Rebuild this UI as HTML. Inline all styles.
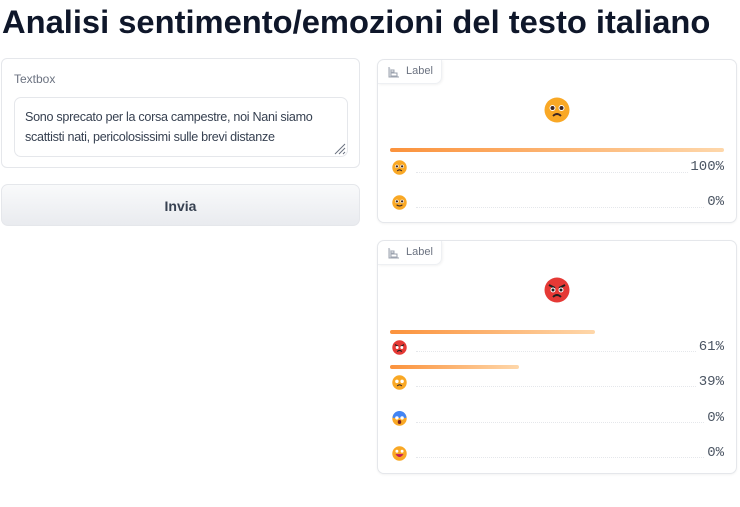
<!DOCTYPE html>
<html><head><meta charset="utf-8"><style>
*{box-sizing:border-box;margin:0;padding:0}
body{width:740px;height:507px;background:#fff;font-family:"Liberation Sans","DejaVu Sans",sans-serif;position:relative;overflow:hidden;color:#374151}
.a{position:absolute}
h1{position:absolute;left:2px;top:3px;font-size:32.7px;font-weight:bold;color:#0f172a;white-space:nowrap;letter-spacing:0}
.panel{border:1px solid #e5e7eb;border-radius:6px;background:#fff}
.card{border:1px solid #e5e7eb;border-radius:7px;background:#fff;box-shadow:0 1px 2px rgba(0,0,0,.05)}
.tab{position:absolute;left:0;top:0;width:64px;height:24px;border-right:1px solid #eef0f3;border-bottom:1px solid #eef0f3;border-radius:7px 0 7px 0;font-size:11px;color:#6b7280;box-shadow:1px 1px 2px rgba(0,0,0,.05)}
.tab span{position:absolute;left:28px;top:5px}
.bar{position:absolute;height:4px;border-radius:3px;background:linear-gradient(90deg,#fb923c,#fed7aa)}
.dots{position:absolute;height:0;border-top:1px dotted #e5e7eb}
.pct{position:absolute;right:12px;font-family:"Liberation Mono","DejaVu Sans Mono",monospace;font-size:14px;color:#4b5563}
</style></head><body>
<h1>Analisi sentimento/emozioni del testo italiano</h1>

<div class="a panel" style="left:1px;top:58px;width:359px;height:110px"></div>
<div class="a" style="left:14px;top:72px;font-size:12px;color:#6b7280">Textbox</div>
<div class="a" style="left:14px;top:97px;width:334px;height:60px;border:1px solid #e5e7eb;border-radius:7px;padding:9px 8px 0 10px;font-size:12.6px;line-height:20px;color:#374151;letter-spacing:-0.3px;overflow:hidden;white-space:nowrap">Sono sprecato per la corsa campestre, noi Nani siamo<br>scattisti nati, pericolosissimi sulle brevi distanze</div>
<svg class="a" style="left:332px;top:141px" width="14" height="14"><path d="M3 13L13 3M7 13L13 7M11 13L13 11" stroke="#6b7280" stroke-width="1"/></svg>

<div class="a" style="left:1px;top:184px;width:359px;height:42px;border:1px solid #e5e7eb;border-radius:7px;background:linear-gradient(#f9fafb,#e9ebef);text-align:center;line-height:42px;font-size:14px;font-weight:bold;color:#374151">Invia</div>

<!-- card 1 -->
<div class="a card" style="left:377px;top:59px;width:360px;height:164px">
 <div class="tab"><svg class="a" style="left:10px;top:7px" width="12" height="11"><path d="M1 0V10H11M3 3H6V5H3ZM3 6H9V9H3Z" stroke="#9ca3af" fill="#e5e7eb" stroke-width="1"/></svg><span>Label</span></div>
</div>
<svg class="a" style="left:544px;top:97px" width="26" height="26" viewBox="0 0 26 26"><circle cx="13" cy="13" r="12.5" fill="#f9a825"/><circle cx="8.5" cy="11" r="3" fill="#fff"/><circle cx="17.5" cy="11" r="3" fill="#fff"/><circle cx="8.5" cy="11" r="2" fill="#3e2723"/><circle cx="17.5" cy="11" r="2" fill="#3e2723"/><path d="M9 19Q13 15 17 19" stroke="#3e2723" stroke-width="1.8" fill="none"/></svg>
<div class="bar" style="left:390px;top:148px;width:334px"></div>
<svg class="a" style="left:392px;top:160px" width="15" height="15" viewBox="0 0 26 26"><circle cx="13" cy="13" r="12.5" fill="#f9a825"/><circle cx="8.5" cy="11" r="3" fill="#fff"/><circle cx="17.5" cy="11" r="3" fill="#fff"/><circle cx="8.5" cy="11" r="2" fill="#3e2723"/><circle cx="17.5" cy="11" r="2" fill="#3e2723"/><path d="M9 19Q13 15 17 19" stroke="#3e2723" stroke-width="2" fill="none"/></svg>
<div class="dots" style="left:416px;top:172px;width:272px"></div>
<div class="pct" style="right:16px;top:159px">100%</div>
<svg class="a" style="left:392px;top:195px" width="15" height="15" viewBox="0 0 26 26"><circle cx="13" cy="13" r="12.5" fill="#f9a825"/><circle cx="8.5" cy="11" r="3" fill="#fff"/><circle cx="17.5" cy="11" r="3" fill="#fff"/><circle cx="8.5" cy="11" r="2" fill="#3e2723"/><circle cx="17.5" cy="11" r="2" fill="#3e2723"/><path d="M8 17Q13 21 18 17" stroke="#3e2723" stroke-width="2" fill="none"/></svg>
<div class="dots" style="left:416px;top:207px;width:288px"></div>
<div class="pct" style="right:16px;top:194px">0%</div>

<!-- card 2 -->
<div class="a card" style="left:377px;top:240px;width:360px;height:234px">
 <div class="tab"><svg class="a" style="left:10px;top:7px" width="12" height="11"><path d="M1 0V10H11M3 3H6V5H3ZM3 6H9V9H3Z" stroke="#9ca3af" fill="#e5e7eb" stroke-width="1"/></svg><span>Label</span></div>
</div>
<svg class="a" style="left:544px;top:277px" width="26" height="26" viewBox="0 0 26 26"><circle cx="13" cy="13" r="12.5" fill="#e53935"/><path d="M5 8L11 11M21 8L15 11" stroke="#212121" stroke-width="2"/><circle cx="9" cy="13" r="2.5" fill="#fff"/><circle cx="17" cy="13" r="2.5" fill="#fff"/><circle cx="9" cy="13" r="1.5" fill="#212121"/><circle cx="17" cy="13" r="1.5" fill="#212121"/><path d="M9 20Q13 16 17 20" stroke="#212121" stroke-width="1.8" fill="none"/></svg>
<div class="bar" style="left:390px;top:330px;width:205px"></div>
<svg class="a" style="left:392px;top:340px" width="15" height="15" viewBox="0 0 26 26"><circle cx="13" cy="13" r="12.5" fill="#e53935"/><path d="M5 8L11 11M21 8L15 11" stroke="#212121" stroke-width="2"/><circle cx="9" cy="13" r="2.5" fill="#fff"/><circle cx="17" cy="13" r="2.5" fill="#fff"/><path d="M9 20Q13 16 17 20" stroke="#212121" stroke-width="2" fill="none"/></svg>
<div class="dots" style="left:416px;top:351px;width:280px"></div>
<div class="pct" style="right:16px;top:339px">61%</div>
<div class="bar" style="left:390px;top:365px;width:129px"></div>
<svg class="a" style="left:392px;top:375px" width="15" height="15" viewBox="0 0 26 26"><circle cx="13" cy="13" r="12.5" fill="#f9a825"/><circle cx="8.5" cy="11" r="3" fill="#fff"/><circle cx="17.5" cy="11" r="3" fill="#fff"/><path d="M9 19Q13 15 17 19" stroke="#3e2723" stroke-width="2" fill="none"/></svg>
<div class="dots" style="left:416px;top:386px;width:280px"></div>
<div class="pct" style="right:16px;top:374px">39%</div>
<svg class="a" style="left:392px;top:411px" width="15" height="15" viewBox="0 0 26 26"><circle cx="13" cy="13" r="12.5" fill="#f9a825"/><path d="M1 12A12 12 0 0 1 25 12Z" fill="#4285f4"/><circle cx="8.5" cy="12" r="3" fill="#fff"/><circle cx="17.5" cy="12" r="3" fill="#fff"/><ellipse cx="13" cy="19" rx="3" ry="3.5" fill="#7b1f1f"/></svg>
<div class="dots" style="left:416px;top:422px;width:288px"></div>
<div class="pct" style="right:16px;top:410px">0%</div>
<svg class="a" style="left:392px;top:446px" width="15" height="15" viewBox="0 0 26 26"><circle cx="13" cy="13" r="12.5" fill="#f9a825"/><circle cx="8.5" cy="9" r="2.5" fill="#fff"/><circle cx="17.5" cy="9" r="2.5" fill="#fff"/><path d="M6 14H20Q13 24 6 14Z" fill="#c2185b"/></svg>
<div class="dots" style="left:416px;top:457px;width:288px"></div>
<div class="pct" style="right:16px;top:445px">0%</div>
</body></html>
